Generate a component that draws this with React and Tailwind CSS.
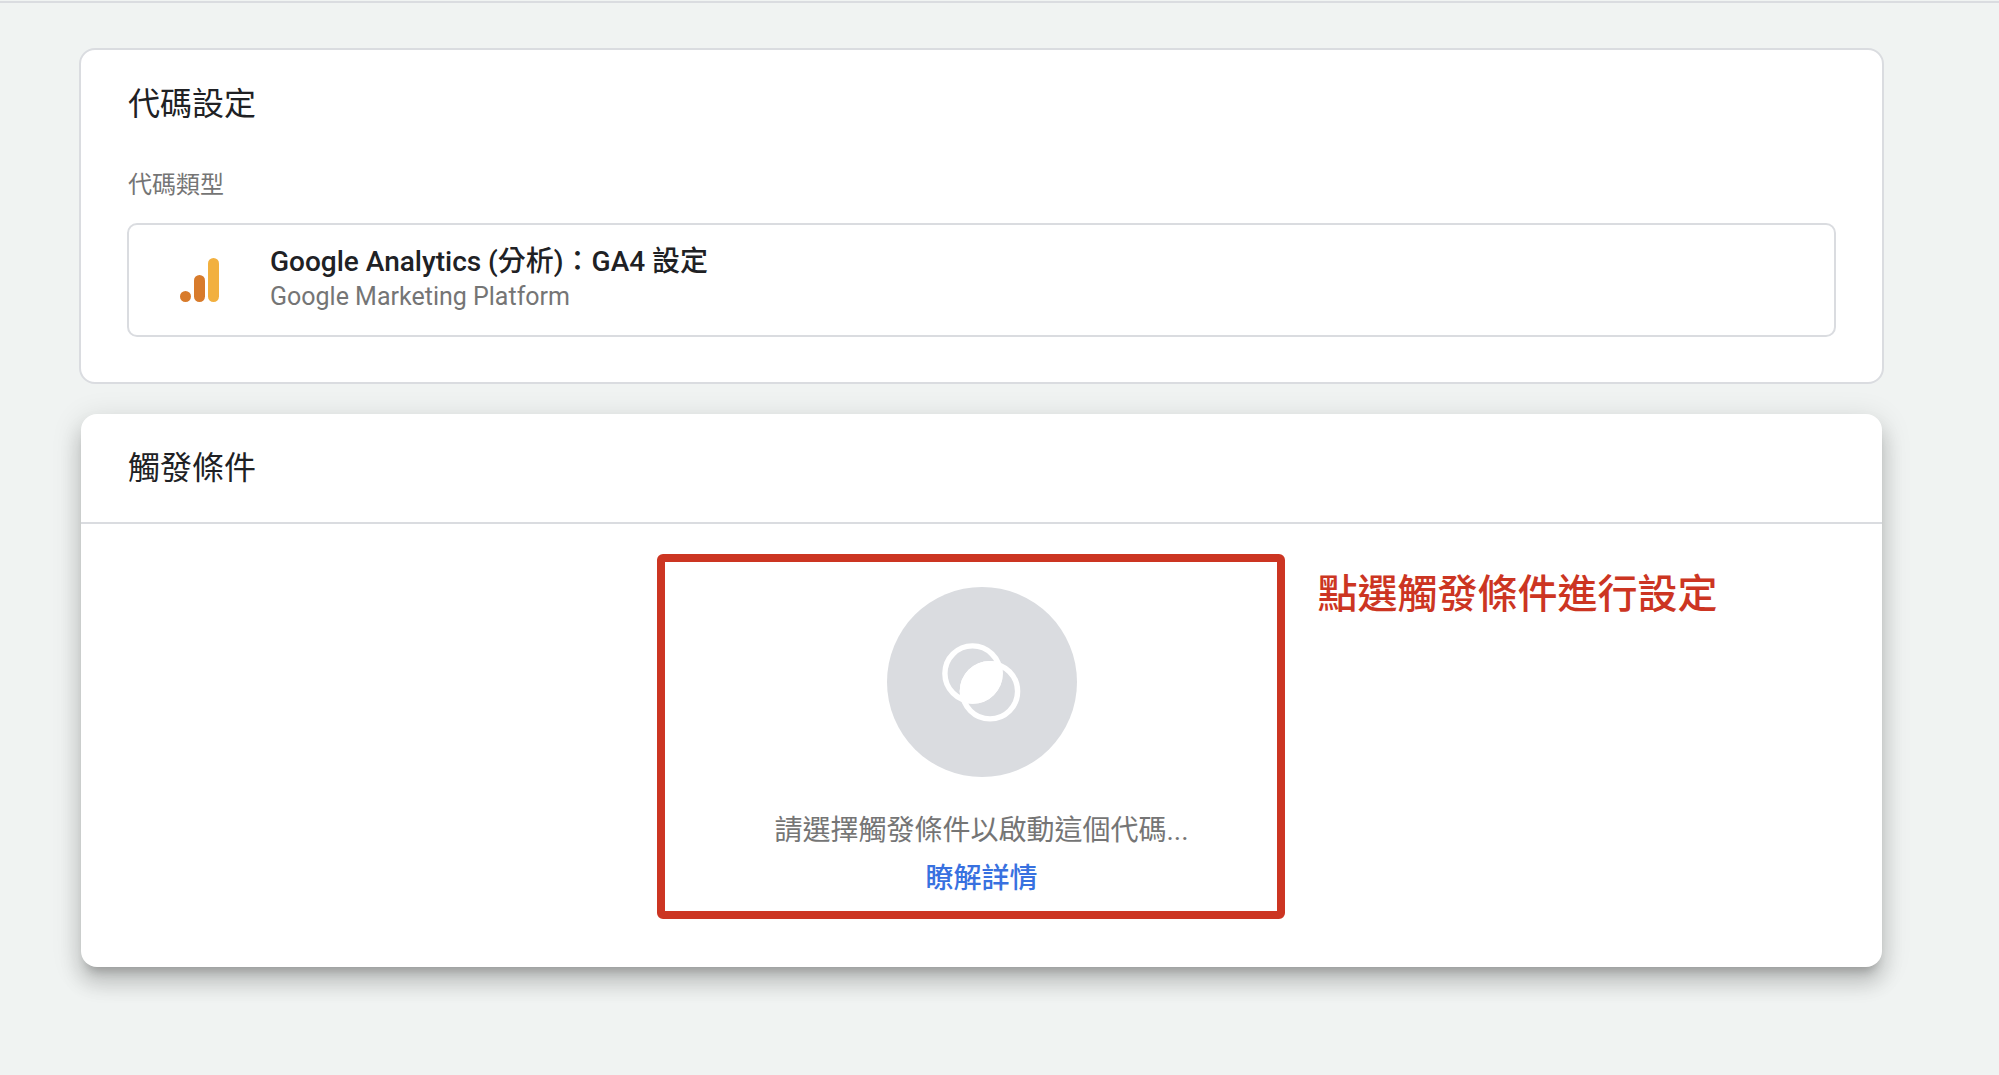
import React from "react";

const AnalyticsLogo = () => (
  <svg width="40" height="44" viewBox="0 0 40 44" aria-hidden="true">
    <rect x="28" y="0" width="11" height="44" rx="5.5" fill="#f2b03f" />
    <rect x="14" y="17" width="11" height="27" rx="5.5" fill="#d87b2b" />
    <circle cx="5.5" cy="38.5" r="5.5" fill="#d87b2b" />
  </svg>
);

const TriggerIcon = () => (
  <svg width="190" height="190" viewBox="0 0 190 190" aria-hidden="true">
    <defs>
      <clipPath id="first-circle">
        <circle cx="85.5" cy="86.5" r="30.3" />
      </clipPath>
    </defs>
    <circle cx="95" cy="95" r="95" fill="#dadce0" />
    <g fill="none" stroke="#fff" strokeWidth="5.4">
      <circle cx="85.5" cy="86.5" r="27.6" />
      <circle cx="103" cy="104.3" r="27.6" />
    </g>
    <circle cx="103" cy="104.3" r="30.3" fill="#fff" clipPath="url(#first-circle)" />
  </svg>
);

const TagSettings = () => {
  return (
    <section className="bg-white border-2 border-[#dadce0] rounded-2xl px-[46px] pt-[34px] pb-[45px]">
      <h2 className="px-px text-[32px] leading-10 text-[#202124]">代碼設定</h2>
      <p className="mt-[45px] px-px text-2xl leading-8 text-[#757575]">代碼類型</p>
      <button
        type="button"
        className="mt-[22px] w-full flex items-start border-2 border-[#dadce0] rounded-[10px] pl-[51px] pr-6 pt-[17px] pb-6 text-left"
      >
        <span className="mt-4 mr-[50px] shrink-0">
          <AnalyticsLogo />
        </span>
        <span className="block">
          <span className="block text-[28px] leading-10 font-medium text-[#202124]">
            Google Analytics (分析)：GA4 設定
          </span>
          <span className="block text-[25px] leading-[29px] text-[#757575]">
            Google Marketing Platform
          </span>
        </span>
      </button>
    </section>
  );
};

const Triggering = () => {
  return (
    <section className="relative mx-0.5 mt-[30px] bg-white rounded-2xl shadow-[0_10px_10px_-6px_rgba(0,0,0,0.2),0_16px_20px_2px_rgba(0,0,0,0.14),0_6px_28px_4px_rgba(0,0,0,0.1)]">
      <div className="border-b-2 border-[#dadce0] px-[46px] py-[34px]">
        <h2 className="px-px text-[32px] leading-10 text-[#202124]">觸發條件</h2>
      </div>
      <div className="relative flex flex-col items-center pt-[63px] pb-[68px] text-[28px] leading-10">
        <button type="button" aria-label="觸發條件" className="rounded-full">
          <TriggerIcon />
        </button>
        <p className="mt-[34px] text-[#757575]">請選擇觸發條件以啟動這個代碼...</p>
        <a href="#" className="mt-2 font-medium text-[#3871e0]">
          瞭解詳情
        </a>
        {/* red callout over the card */}
        <div className="pointer-events-none absolute top-[30px] left-1/2 -ml-[325px] w-[628px] h-[365px] border-8 border-[#cc3522] rounded-md" />
        <p className="absolute top-[46px] left-1/2 ml-[336px] text-[40px] leading-[50px] font-medium text-[#cc3522] whitespace-nowrap">
          點選觸發條件進行設定
        </p>
      </div>
    </section>
  );
};

const App = () => {
  return (
    <main
      lang="zh-Hant-TW"
      className="min-h-screen bg-[#f0f3f2] pt-px font-[Roboto,'Noto_Sans_CJK_TC',sans-serif]"
    >
      <div className="border-t-2 border-[#dadce0] pt-[45px] pl-[79px] pr-[115px] pb-16">
        <TagSettings />
        <Triggering />
      </div>
    </main>
  );
};

export default App;
